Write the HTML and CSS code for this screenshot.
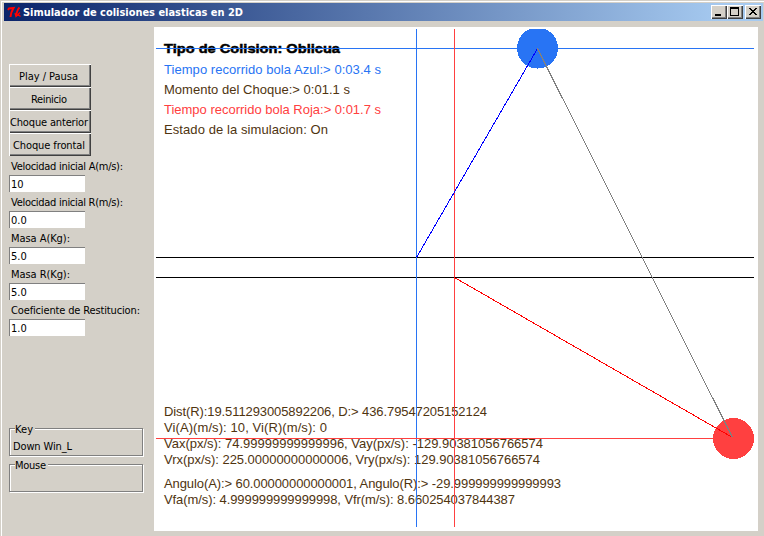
FILE: index.html
```html
<!DOCTYPE html>
<html lang="es">
<head>
<meta charset="utf-8">
<title>Simulador de colisiones elasticas en 2D</title>
<link rel="stylesheet" href="styles.css">
</head>
<body>
<div class="window">
  <header class="titlebar">
    <svg class="logo" width="16" height="16" viewBox="0 0 16 16"><path stroke-width="2" d="M1 6L2 4.5L6.5 4Q4 8 3.5 13"/><path stroke-width="1.8" d="M12.5 3.5Q10 6 9 12"/><path stroke-width="1.3" d="M8 9L9 12.5L13 8.5M10.5 10L13.5 12.5"/></svg>
    <svg class="caption" width="240" height="18"><text x="0" y="13" textLength="220" lengthAdjust="spacingAndGlyphs">Simulador de colisiones elasticas en 2D</text></svg>
    <div class="controls">
      <button class="control"><svg width="16" height="14"><path d="M4 9h6v2H4z"/></svg></button>
      <button class="control"><svg width="16" height="14"><path fill-rule="evenodd" d="M3 2h9v9H3zM4 4v6h7V4z"/></svg></button>
      <button class="control close"><svg width="16" height="14"><path d="M4 3h2v1h1v1h2V4h1V3h2v1h-1v1h-1v1H9v1h1v1h1v1h1v1h-2V9H9V8H7v1H6v1H4V9h1V8h1V7h1V6H6V5H5V4H4z"/></svg></button>
    </div>
  </header>
  <main class="content">
    <aside class="sidebar">
      <div class="buttons">
        <button class="push"><svg width="79" height="20"><text x="9" y="14" textLength="59">Play / Pausa</text></svg></button>
        <button class="push"><svg width="79" height="20"><text x="21" y="14" textLength="36">Reinicio</text></svg></button>
        <button class="push"><svg width="79" height="20"><text x="0" y="14" textLength="78">Choque anterior</text></svg></button>
        <button class="push"><svg width="79" height="20"><text x="3" y="14" textLength="72">Choque frontal</text></svg></button>
      </div>
      <div class="fields">
        <label class="field"><svg width="140" height="17"><text x="2" y="12" textLength="112">Velocidad inicial A(m/s):</text></svg><input value="10"></label>
        <label class="field"><svg width="140" height="17"><text x="2" y="12" textLength="112">Velocidad inicial R(m/s):</text></svg><input value="0.0"></label>
        <label class="field"><svg width="140" height="17"><text x="2" y="12" textLength="59">Masa A(Kg):</text></svg><input value="5.0"></label>
        <label class="field"><svg width="140" height="17"><text x="2" y="12" textLength="59">Masa R(Kg):</text></svg><input value="5.0"></label>
        <label class="field"><svg width="140" height="17"><text x="2" y="12" textLength="129">Coeficiente de Restitucion:</text></svg><input value="1.0"></label>
      </div>
      <div class="groups">
        <section class="group"><h2 class="legend"><svg width="20" height="14"><text x="0" y="10" textLength="18">Key</text></svg></h2><svg width="120" height="15"><text x="3" y="10" textLength="59">Down Win_L</text></svg></section>
        <section class="group"><h2 class="legend"><svg width="33" height="14"><text x="0" y="10" textLength="31">Mouse</text></svg></h2></section>
      </div>
    </aside>
    <svg class="canvas" width="604" height="504" viewBox="154 27 604 504">
      <g class="readout">
        <text class="heading" x="164" y="53" textLength="176" lengthAdjust="spacingAndGlyphs">Tipo de Colision: Oblicua</text>
        <text class="blue" x="164" y="74" textLength="217">Tiempo recorrido bola Azul:&gt; 0:03.4 s</text>
        <text x="164" y="94" textLength="186">Momento del Choque:&gt; 0:01.1 s</text>
        <text class="red" x="164" y="114" textLength="217">Tiempo recorrido bola Roja:&gt; 0:01.7 s</text>
        <text x="164" y="134" textLength="164">Estado de la simulacion: On</text>
        <text x="164" y="416" textLength="323">Dist(R):19.511293005892206, D:&gt; 436.79547205152124</text>
        <text x="164" y="432" textLength="163">Vi(A)(m/s): 10, Vi(R)(m/s): 0</text>
        <text x="164" y="448" textLength="379">Vax(px/s): 74.99999999999996, Vay(px/s): -129.90381056766574</text>
        <text x="164" y="464" textLength="376">Vrx(px/s): 225.00000000000006, Vry(px/s): 129.90381056766574</text>
        <text x="164" y="488" textLength="397">Angulo(A):&gt; 60.00000000000001, Angulo(R):&gt; -29.999999999999993</text>
        <text x="164" y="504" textLength="351">Vfa(m/s): 4.999999999999998, Vfr(m/s): 8.660254037844387</text>
      </g>
      <g class="lines">
        <path class="black-line" d="M156 257.5H754M156 277.5H754"/>
        <path class="blue-line" d="M156 48.5H754M416.5 29V527"/>
        <path class="red-line" d="M156 438.5H734M454.5 29V527"/>
        <path class="blue-ball" d="M530 29H545A20.5 20.5 0 1 1 530 29Z"/>
        <circle class="red-ball" cx="733.5" cy="438.5" r="20.5"/>
        <path class="path-a" d="M416.5 257.5L537.5 48.5"/>
        <path class="path-r" d="M454.5 277.5L732.5 437.5"/>
        <path class="distance" d="M537.5 48.5L732.5 437.5"/>
      </g>
    </svg>
  </main>
</div>
</body>
</html>
```
FILE: styles.css
```css
* { box-sizing: border-box; }
body { margin: 0; background: #d4d0c8; overflow: hidden; }
svg { display: block; }
button { padding: 0; margin: 0; background: #d4d0c8; border-radius: 0; }

.window {
  width: 764px;
  height: 536px;
  padding: 2px 1px 0 2px;
  border-top: 1px solid #d4d0c8;
  border-left: 1px solid #d4d0c8;
  box-shadow: inset 1px 1px #fff;
  background: #d4d0c8;
  font: 11px "DejaVu Sans Condensed", "DejaVu Sans", sans-serif;
  font-stretch: condensed;
}
.titlebar {
  display: flex;
  align-items: center;
  height: 18px;
  margin-left: 1px;
  padding: 0 2px 0 3px;
  background: linear-gradient(90deg, #0a246a, #a6caf0 95%);
}
.logo { fill: none; stroke: #f00; }
.caption { fill: #fff; font-weight: bold; }
.controls { display: flex; margin-left: auto; }
.control {
  width: 16px;
  height: 14px;
  border: 0;
  box-shadow: inset 1px 1px #fff, inset -1px -1px #404040, inset -2px -2px #808080;
  shape-rendering: crispEdges;
}
.close { margin-left: 2px; }

.content { display: flex; padding-top: 6px; }
.sidebar { width: 151px; height: 504px; padding: 37px 0 0 6px; }
.buttons { display: flex; flex-direction: column; width: 82px; }
.push {
  height: 23px;
  padding: 1px;
  border: 0;
  box-shadow: inset 1px 1px #fff, inset -1px -1px #404040, inset -2px -2px #808080;
  font: inherit;
}
.fields { padding-top: 2px; }
.field { display: block; height: 36px; }
.field input {
  display: block;
  width: 76px;
  height: 17px;
  padding: 1px 0 0 1px;
  border: 0 solid #808080;
  border-width: 1px 0 0 1px;
  border-radius: 0;
  background: #fff;
  color: #000;
  font: inherit;
}
.groups { display: grid; gap: 8px; margin-top: 90px; width: 134px; }
.group {
  height: 28px;
  border: 1px solid #808080;
  box-shadow: 1px 1px #fff, inset 1px 1px #fff;
}
.legend {
  width: max-content;
  height: 10px;
  margin: -6px 0 0 5px;
  background: #d4d0c8;
  font: inherit;
}
.legend svg { overflow: visible; }
.group > svg { margin-top: 7px; }

.canvas { background: #fff; }
.readout { font: 13px "Liberation Sans", Arial, sans-serif; fill: #4f3410; }
.heading { font-weight: 900; fill: #000; stroke: #000; stroke-width: .5; }
.blue { fill: #2874f4; }
.red { fill: #ff4040; }
.lines { shape-rendering: crispEdges; fill: none; stroke-width: 1; }
.black-line { stroke: #000; }
.blue-line { stroke: #2874f4; }
.red-line { stroke: #ff4040; }
.blue-ball { fill: #2874f4; }
.red-ball { fill: #ff4040; }
.path-a { stroke: #00f; }
.path-r { stroke: #f00; }
.distance { stroke: #808080; }
```
